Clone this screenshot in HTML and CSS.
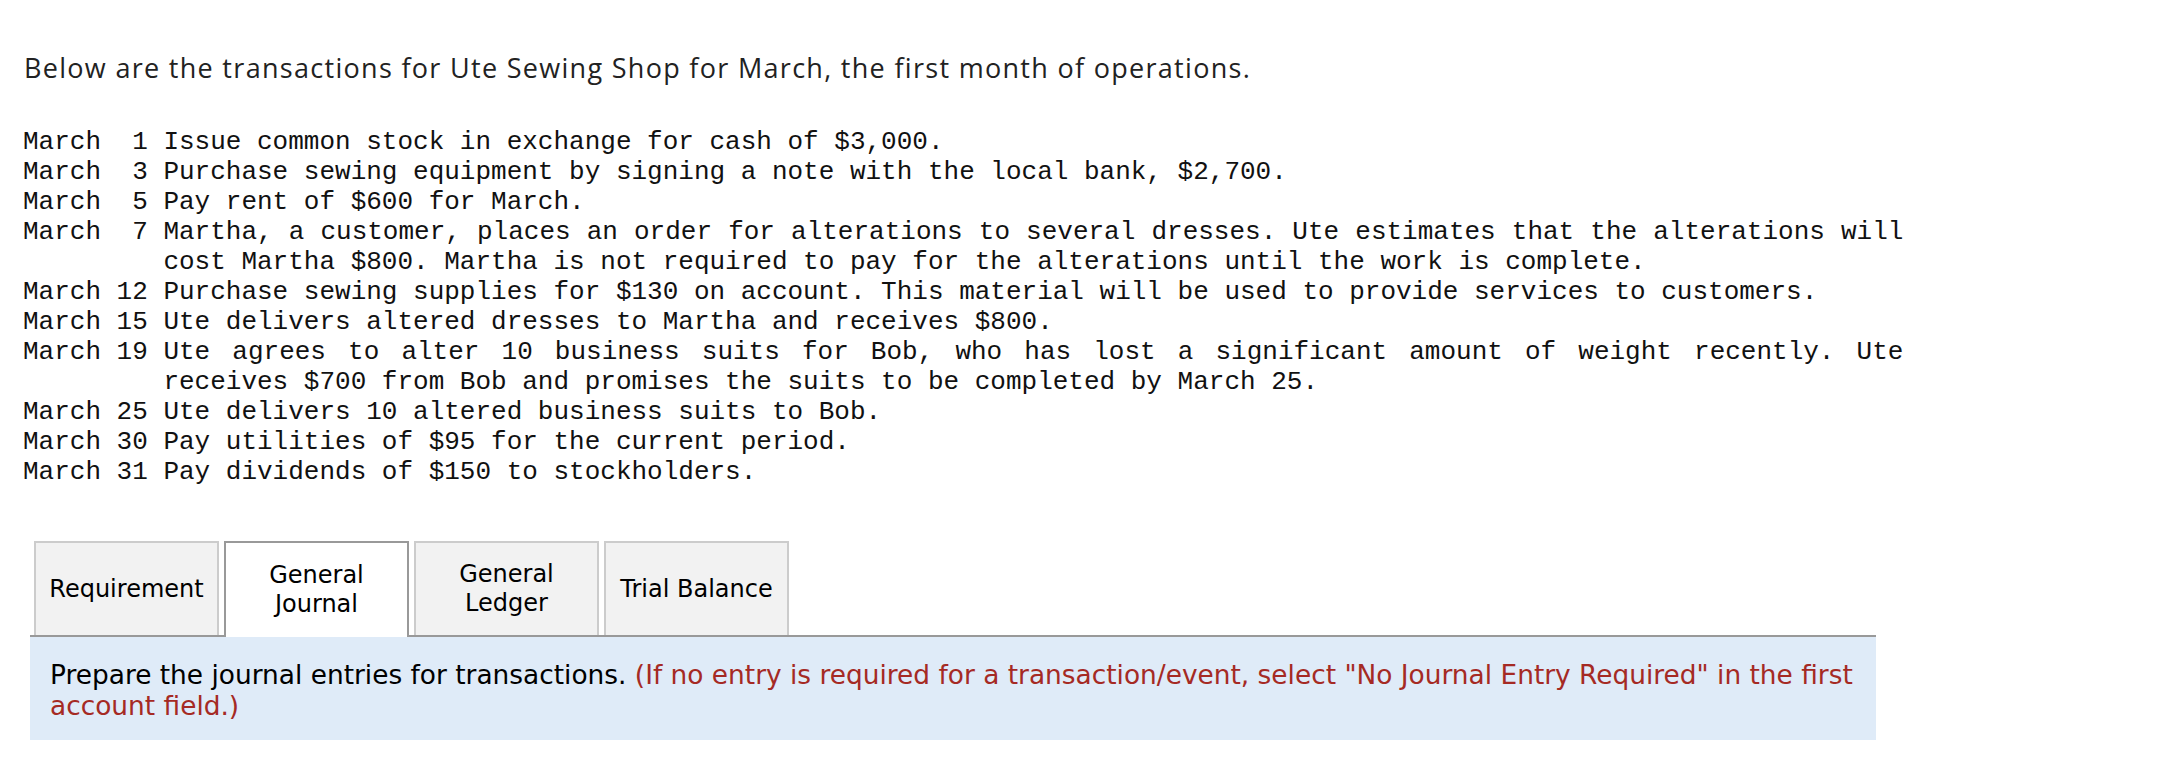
FILE: index.html
```html
<!DOCTYPE html>
<html lang="en">
  <head>
    <meta charset="UTF-8" />
    <title>Ute Sewing Shop</title>
    <link rel="stylesheet" href="styles.css">
  </head>
  <body>
    <div class="page">
      <p class="intro">Below are the transactions for Ute Sewing Shop for March, the first month of operations.</p>

      <div class="tx">
        <span>March</span><span class="day">1</span><span class="desc">Issue common stock in exchange for cash of $3,000.</span>
        <span>March</span><span class="day">3</span><span class="desc">Purchase sewing equipment by signing a note with the local bank, $2,700.</span>
        <span>March</span><span class="day">5</span><span class="desc">Pay rent of $600 for March.</span>
        <span>March</span><span class="day">7</span><span class="desc">Martha, a customer, places an order for alterations to several dresses. Ute estimates that the alterations will cost Martha $800. Martha is not required to pay for the alterations until the work is complete.</span>
        <span>March</span><span class="day">12</span><span class="desc">Purchase sewing supplies for $130 on account. This material will be used to provide services to customers.</span>
        <span>March</span><span class="day">15</span><span class="desc">Ute delivers altered dresses to Martha and receives $800.</span>
        <span>March</span><span class="day">19</span><span class="desc">Ute agrees to alter 10 business suits for Bob, who has lost a significant amount of weight recently. Ute receives $700 from Bob and promises the suits to be completed by March 25.</span>
        <span>March</span><span class="day">25</span><span class="desc">Ute delivers 10 altered business suits to Bob.</span>
        <span>March</span><span class="day">30</span><span class="desc">Pay utilities of $95 for the current period.</span>
        <span>March</span><span class="day">31</span><span class="desc">Pay dividends of $150 to stockholders.</span>
      </div>

      <div class="tabs">
        <div class="tab">Requirement</div>
        <div class="tab active">General<br>Journal</div>
        <div class="tab">General<br>Ledger</div>
        <div class="tab">Trial Balance</div>
      </div>

      <div class="panel">
        Prepare the journal entries for transactions. <span class="note">(If no entry is required for a transaction/event, select "No Journal Entry Required" in the first account field.)</span>
      </div>
    </div>
  </body>
</html>
```

FILE: styles.css
```css
body {
  margin: 0;
  background-color: #fff;
  color: #000;
}

.page {
  padding: 53px 22px 0 23px;
}

.intro {
  margin: 0 0 0 1px;
  font-family: "Open Sans", sans-serif;
  font-size: 27px;
  line-height: 30px;
  letter-spacing: 1.3px;
  color: #222;
}

.tx {
  margin-top: 44px;
  display: grid;
  grid-template-columns: 6ch 3ch 1740px;
  font-family: "Liberation Mono", "Courier New", monospace;
  font-size: 26px;
  line-height: 30px;
  color: #111;
}

.tx .day {
  text-align: right;
  padding-right: 1ch;
}

.tx .desc {
  text-align: justify;
}

.tabs {
  margin-top: 54px;
  margin-left: 11px;
  display: flex;
  gap: 5px;
}

.tab {
  width: 181px;
  height: 92px;
  display: flex;
  align-items: center;
  justify-content: center;
  text-align: center;
  font-family: "DejaVu Sans", Verdana, sans-serif;
  font-size: 24px;
  line-height: 29px;
  background-color: #f2f2f2;
  border: 2px solid #cccccc;
  border-bottom: none;
}

.tab.active {
  background-color: #fff;
  border-color: #999999;
  height: 94px;
  margin-bottom: -2px;
}

.panel {
  margin-left: 7px;
  width: 1806px;
  padding: 22px 20px 19px 20px;
  border-top: 2px solid #999999;
  background-color: #dfebf8;
  font-family: "DejaVu Sans", Verdana, sans-serif;
  font-size: 26.4px;
  line-height: 31px;
}

.panel .note {
  color: #a52a24;
}
```
